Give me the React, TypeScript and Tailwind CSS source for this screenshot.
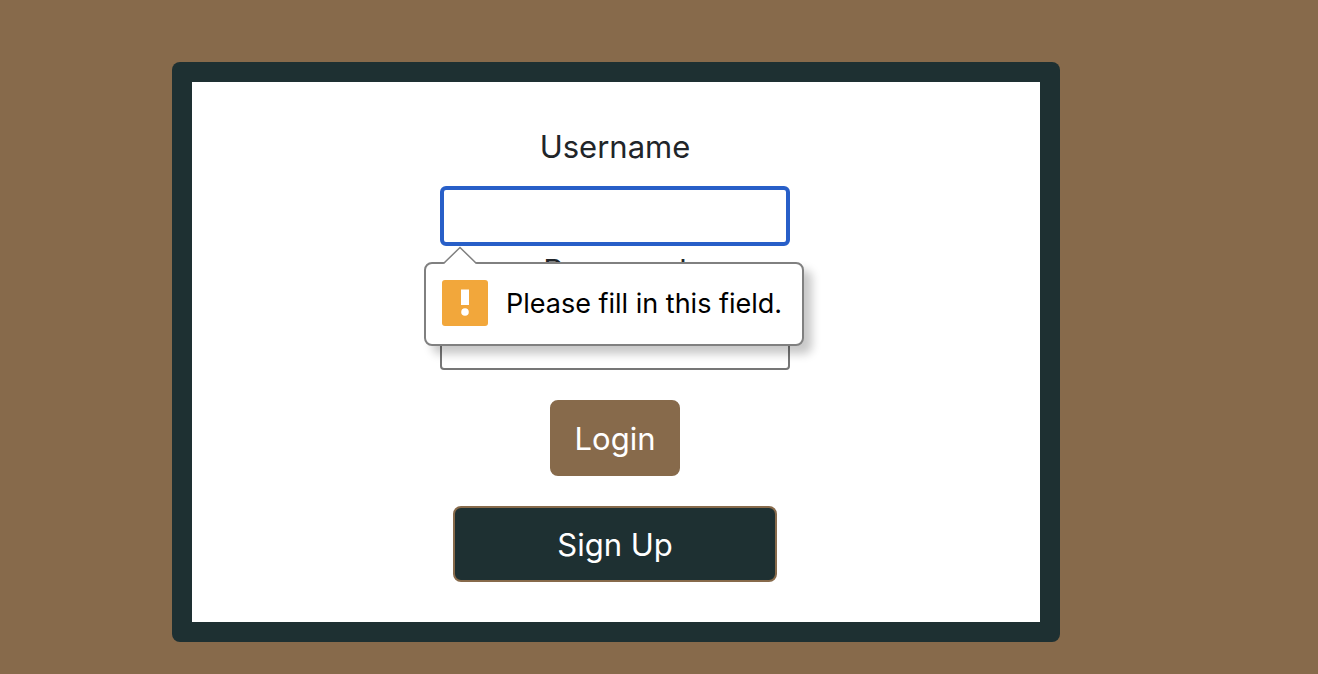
import React from "react";

const labelClass = "mb-3.5 block text-center text-[31px] leading-[50px] text-[#212529]";

function ValidationBubble({ id, message }: { id: string; message: string }) {
  return (
    <div
      id={id}
      role="alert"
      className="absolute top-full -left-4 z-10 mt-4 flex w-[380px] items-start gap-[18px] rounded-lg border-2 border-[#808080] bg-white p-4 text-black shadow-[8px_8px_10px_rgba(0,0,0,0.22)]"
    >
      <svg
        className="absolute -top-[18px] left-4 h-5 w-9"
        viewBox="0 0 36 20"
        aria-hidden="true"
      >
        <path d="M1.500 20V18L18 2L34.500 18V20Z" fill="#fff" />
        <path d="M1.500 17.500L18 1.500L34.500 17.500" fill="none" stroke="#808080" strokeWidth="1.500" />
      </svg>
      <svg className="size-[46px] shrink-0" viewBox="0 0 46 46" aria-hidden="true">
        <rect width="46" height="46" rx="3" fill="#f2a73b" />
        <rect x="19" y="9.500" width="8" height="15.500" fill="#fff" />
        <circle cx="23" cy="32" r="3.800" fill="#fff" />
      </svg>
      <span className="text-[27px] leading-[48px] whitespace-nowrap">{message}</span>
    </div>
  );
}

export default function App() {
  return (
    <main className="min-h-screen bg-[#876a4b] pt-[62px] pr-[258px] pb-8 pl-[172px] font-['Inter',sans-serif]">
      <form
        noValidate
        onSubmit={(event) => event.preventDefault()}
        className="rounded-lg bg-[#1e3032] p-5"
      >
        <div className="flex flex-col items-center bg-white py-10 pr-0.5">
          <div className="relative w-[350px]">
            <label htmlFor="username" className={labelClass}>
              Username
            </label>
            <input
              id="username"
              type="text"
              required
              aria-describedby="username-error"
              className="block h-[60px] w-full rounded-md border-4 border-[#285fc8] bg-white px-2 text-[31px] outline-none"
            />
            <ValidationBubble id="username-error" message="Please fill in this field." />
          </div>
          <div className="w-[350px]">
            <label htmlFor="password" className={labelClass}>
              Password
            </label>
            <input
              id="password"
              type="password"
              required
              className="block h-[60px] w-full rounded border-2 border-[#767676] bg-white px-2 text-[31px] outline-none"
            />
          </div>
          <button
            type="submit"
            className="mt-[30px] h-[76px] w-[130px] rounded-lg border-2 border-[#876a4b] bg-[#876a4b] pt-0.5 text-[31px] leading-[48px] text-white"
          >
            Login
          </button>
          <button
            type="button"
            className="mt-[30px] h-[76px] w-[324px] rounded-lg border-2 border-[#876a4b] bg-[#1e3032] pt-0.5 text-[31px] leading-[48px] text-white"
          >
            Sign Up
          </button>
        </div>
      </form>
    </main>
  );
}
